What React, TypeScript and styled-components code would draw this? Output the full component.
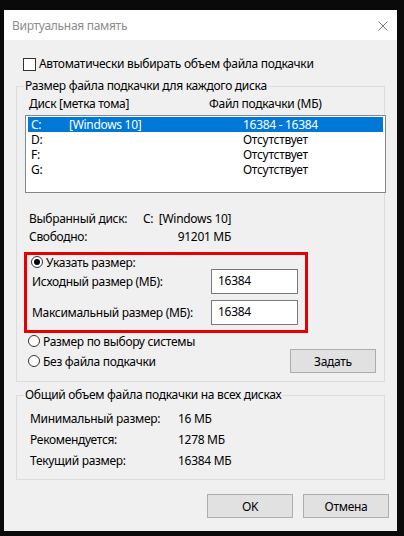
import React from "react";
import styled, { createGlobalStyle } from "styled-components";

const Global = createGlobalStyle`
  html, body { margin: 0; padding: 0; background: #0a0a0a; }
  * { box-sizing: border-box; }
  body { font-family: "Noto Sans", "Open Sans", sans-serif; font-size: 12px; letter-spacing: -0.3px; color: #000; }
`;

const Page = styled.div`
  width: 404px;
  height: 536px;
  padding: 10px 0 0 4px;
  background: #0a0a0a;
`;

const Dialog = styled.div`
  width: 393px;
  height: 521px;
  background: #f0f0f0;
  display: flex;
  flex-direction: column;
`;

const TitleBar = styled.div`
  height: 30px;
  background: #fff;
  display: flex;
  align-items: center;
  padding: 0 9px 0 8px;
  flex: none;
`;

const Title = styled.span`
  color: #8c8c8c;
  font-size: 12px;
`;

const CloseBtn = styled.span`
  margin-left: auto;
  margin-top: 1px;
  display: flex;
  width: 10px;
  height: 10px;
`;

const Content = styled.div`
  padding: 0 12px;
  display: flex;
  flex-direction: column;
`;

const CheckRow = styled.label`
  margin-top: 17px;
  height: 14px;
  padding-left: 7px;
  display: flex;
  align-items: center;
  gap: 3px;
  line-height: 14px;
`;

const CheckBox = styled.span`
  width: 13px;
  height: 13px;
  border: 1px solid #333;
  background: #fff;
  flex: none;
`;

const Group = styled.fieldset<{ $mt: number }>`
  margin: ${(p) => p.$mt}px 0 0 0;
  padding: 0 0 0 8px;
  border: 1px solid #dcdcdc;
  min-width: 0;
`;

const Legend = styled.legend`
  padding: 0 1px;
  margin-left: -1px;
  line-height: 16px;
  height: 16px;
`;

const HeaderRow = styled.div`
  margin-top: 2px;
  height: 16px;
  line-height: 16px;
  display: grid;
  grid-template-columns: 180px 1fr;
  padding-left: 4px;
`;

const ListBox = styled.div`
  margin: 3px -2px 0 0;
  height: 78px;
  border: 1px solid #828790;
  background: #fff;
  padding: 1px 2px;
`;

const ListRow = styled.div<{ $selected?: boolean }>`
  height: 15px;
  line-height: 15px;
  display: grid;
  grid-template-columns: 38px 174px 1fr;
  padding-left: 3px;
  overflow: hidden;
  background: ${(p) => (p.$selected ? "#0078d7" : "transparent")};
  color: ${(p) => (p.$selected ? "#fff" : "#000")};
`;

const InfoGrid = styled.div`
  margin-top: 18px;
  padding-left: 4px;
  display: grid;
  grid-template-columns: 114px 88px;
  row-gap: 2px;
  line-height: 16px;
`;

const InfoValue = styled.span<{ $right?: boolean }>`
  text-align: ${(p) => (p.$right ? "right" : "left")};
  white-space: pre;
`;

const Highlight = styled.div`
  margin: 7px 0 0 -1px;
  width: 284px;
  border: 3px solid #e60000;
  padding: 0 7px 5px 4px;
  display: flex;
  flex-direction: column;
`;

const RadioRow = styled.label<{ $h: number }>`
  height: ${(p) => p.$h}px;
  display: flex;
  align-items: center;
  gap: 3px;
`;

const Radio = styled.span<{ $checked?: boolean }>`
  width: 12px;
  height: 12px;
  border-radius: 50%;
  border: 1px solid #333;
  background: #fff;
  flex: none;
  display: flex;
  align-items: center;
  justify-content: center;
  &::after {
    content: "";
    width: 6px;
    height: 6px;
    border-radius: 50%;
    background: ${(p) => (p.$checked ? "#000" : "transparent")};
  }
`;

const SizeRows = styled.div`
  display: flex;
  flex-direction: column;
  gap: 6px;
`;

const SizeRow = styled.div`
  display: grid;
  grid-template-columns: 180px 87px;
  align-items: center;
  height: 25px;
`;

const SizeLabel = styled.span`
  padding-left: 1px;
`;

const Input = styled.div`
  height: 25px;
  border: 1px solid #7a7a7a;
  background: #fff;
  padding: 3px 0 0 6px;
  line-height: 16px;
`;

const Options = styled.div`
  padding-left: 3px;
  padding-right: 8px;
  padding-bottom: 8px;
  display: flex;
  flex-direction: column;
`;

const OptionRow = styled.div`
  height: 24px;
  display: flex;
  align-items: center;
  justify-content: space-between;
`;

const Button = styled.button<{ $w: number }>`
  width: ${(p) => p.$w}px;
  height: 24px;
  border: 1px solid #adadad;
  background: #e1e1e1;
  font: inherit;
  letter-spacing: inherit;
  color: #000;
  padding: 0;
`;

const TotalsGrid = styled.div`
  margin-top: 8px;
  padding: 0 0 10px 5px;
  display: grid;
  grid-template-columns: 148px 1fr;
  row-gap: 5px;
  line-height: 16px;
`;

const ButtonRow = styled.div`
  margin: 14px -4px 0 0;
  display: flex;
  justify-content: flex-end;
  gap: 10px;
`;

const disks = [
  { d: "C:", label: "[Windows 10]", size: "16384 - 16384", selected: true },
  { d: "D:", label: "", size: "Отсутствует" },
  { d: "F:", label: "", size: "Отсутствует" },
  { d: "G:", label: "", size: "Отсутствует" },
];

export default function App() {
  return (
    <Page>
      <Global />
      <Dialog>
        <TitleBar>
          <Title>Виртуальная память</Title>
          <CloseBtn>
            <svg width="10" height="10" viewBox="0 0 10 10">
              <path d="M0.5 0.5 L9.5 9.5 M9.5 0.5 L0.5 9.5" stroke="#7a7a7a" strokeWidth="1" fill="none" />
            </svg>
          </CloseBtn>
        </TitleBar>
        <Content>
          <CheckRow>
            <CheckBox />
            Автоматически выбирать объем файла подкачки
          </CheckRow>

          <Group $mt={7}>
            <Legend>Размер файла подкачки для каждого диска</Legend>
            <HeaderRow>
              <span>Диск [метка тома]</span>
              <span>Файл подкачки (МБ)</span>
            </HeaderRow>
            <ListBox>
              {disks.map((r) => (
                <ListRow key={r.d} $selected={r.selected}>
                  <span>{r.d}</span>
                  <span>{r.label}</span>
                  <span>{r.size}</span>
                </ListRow>
              ))}
            </ListBox>
            <InfoGrid>
              <span>Выбранный диск:</span>
              <InfoValue>{"C:  [Windows 10]"}</InfoValue>
              <span>Свободно:</span>
              <InfoValue $right>91201 МБ</InfoValue>
            </InfoGrid>
            <Highlight>
              <RadioRow $h={14}>
                <Radio $checked />
                Указать размер:
              </RadioRow>
              <SizeRows>
                <SizeRow>
                  <SizeLabel>Исходный размер (МБ):</SizeLabel>
                  <Input>16384</Input>
                </SizeRow>
                <SizeRow>
                  <SizeLabel>Максимальный размер (МБ):</SizeLabel>
                  <Input>16384</Input>
                </SizeRow>
              </SizeRows>
            </Highlight>
            <Options>
              <RadioRow $h={16}>
                <Radio />
                Размер по выбору системы
              </RadioRow>
              <OptionRow>
                <RadioRow $h={24}>
                  <Radio />
                  Без файла подкачки
                </RadioRow>
                <Button $w={86}>Задать</Button>
              </OptionRow>
            </Options>
          </Group>

          <Group $mt={5}>
            <Legend>Общий объем файла подкачки на всех дисках</Legend>
            <TotalsGrid>
              <span>Минимальный размер:</span>
              <span>16 МБ</span>
              <span>Рекомендуется:</span>
              <span>1278 МБ</span>
              <span>Текущий размер:</span>
              <span>16384 МБ</span>
            </TotalsGrid>
          </Group>

          <ButtonRow>
            <Button $w={86}>OK</Button>
            <Button $w={86}>Отмена</Button>
          </ButtonRow>
        </Content>
      </Dialog>
    </Page>
  );
}
